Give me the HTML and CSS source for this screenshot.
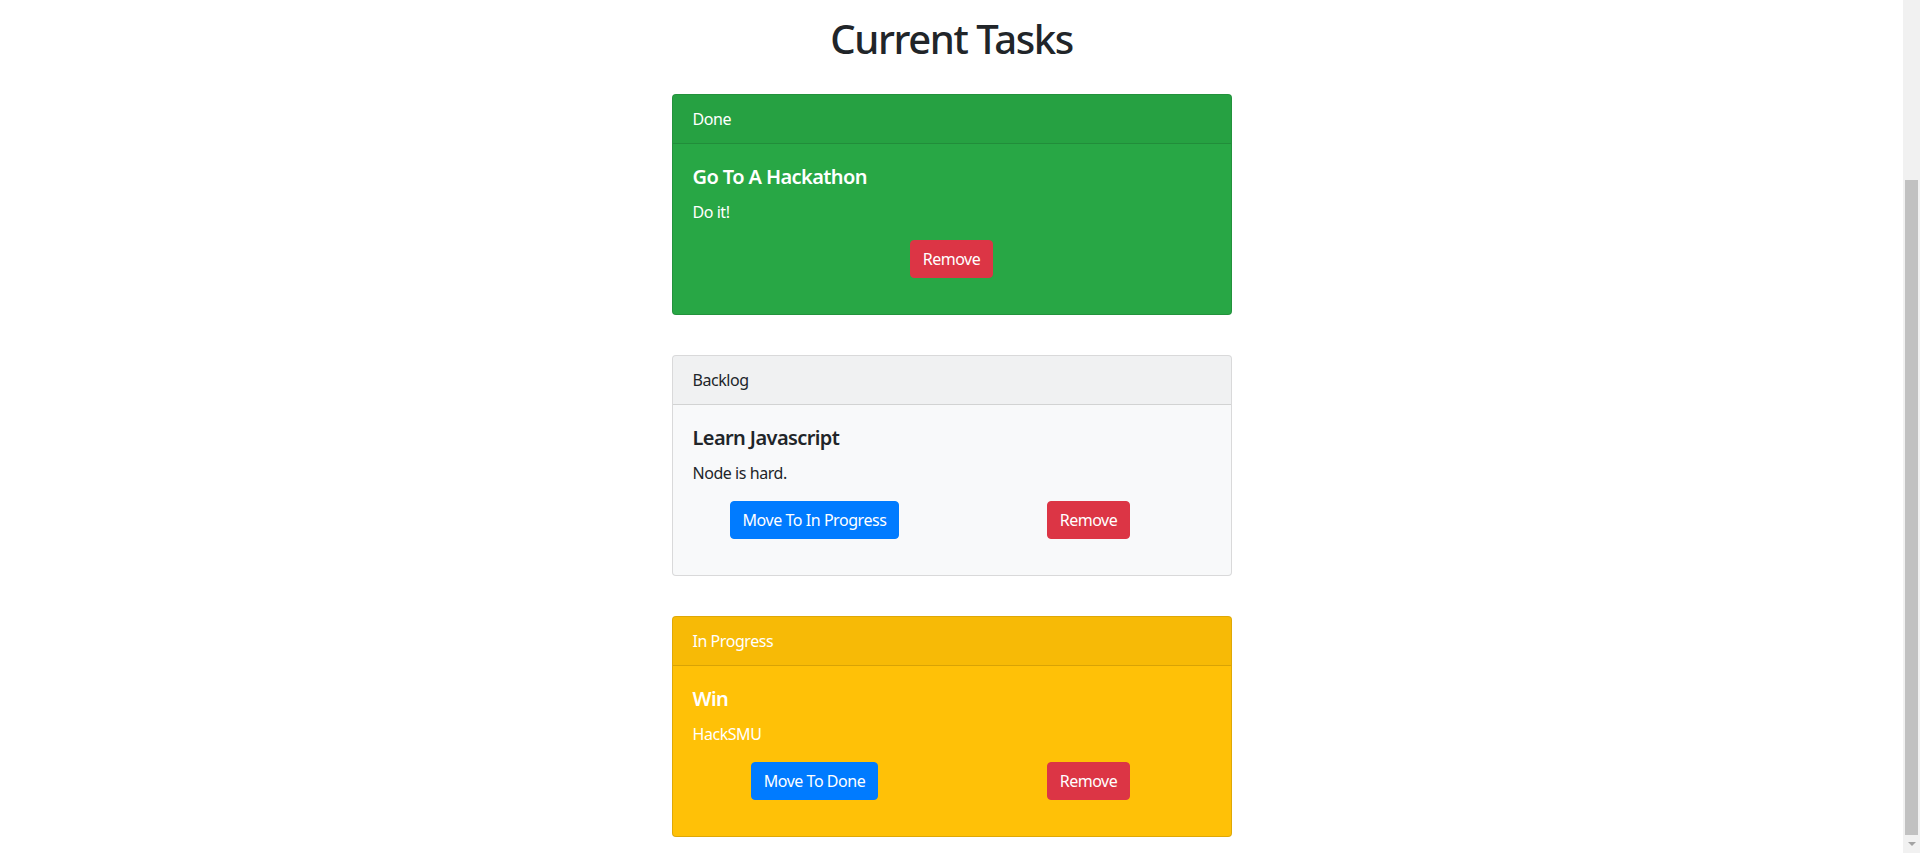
FILE: index.html
```html
<!DOCTYPE html>
<html lang="en">
<head>
<meta charset="utf-8">
<title>Current Tasks</title>
<link rel="stylesheet" href="styles.css">
</head>
<body>
<main class="page">
  <h1 class="page-title">Current Tasks</h1>

  <section class="card card-done">
    <div class="card-header">Done</div>
    <div class="card-body">
      <h5 class="card-title">Go To A Hackathon</h5>
      <p class="card-text">Do it!</p>
      <div class="actions actions-single">
        <div class="action-cell"><button class="btn btn-danger">Remove</button></div>
      </div>
    </div>
  </section>

  <section class="card card-backlog">
    <div class="card-header">Backlog</div>
    <div class="card-body">
      <h5 class="card-title">Learn Javascript</h5>
      <p class="card-text">Node is hard.</p>
      <div class="actions">
        <div class="action-cell"><button class="btn btn-primary">Move To In Progress</button></div>
        <div class="action-cell"><button class="btn btn-danger">Remove</button></div>
      </div>
    </div>
  </section>

  <section class="card card-progress">
    <div class="card-header">In Progress</div>
    <div class="card-body">
      <h5 class="card-title">Win</h5>
      <p class="card-text">HackSMU</p>
      <div class="actions">
        <div class="action-cell"><button class="btn btn-primary">Move To Done</button></div>
        <div class="action-cell"><button class="btn btn-danger">Remove</button></div>
      </div>
    </div>
  </section>
</main>
<div class="scrollbar" aria-hidden="true">
  <div class="scrollbar-thumb"></div>
  <div class="scrollbar-button"><span class="scrollbar-arrow"></span></div>
</div>
</body>
</html>
```
FILE: styles.css
```css
body {
  margin: 0;
  font-family: "Noto Sans", "Open Sans", sans-serif;
  font-size: 16px;
  line-height: 1.5;
  letter-spacing: -0.45px;
  color: #212529;
  background: #fff;
}
.page {
  margin-right: 17px;
  padding: 15px 0 16px;
}
.page-title {
  margin: 0 0 31px;
  font-size: 40px;
  font-weight: 500;
  line-height: 48px;
  letter-spacing: -1.4px;
  text-align: center;
  color: #212529;
}
.card {
  width: 560px;
  margin: 0 auto 40px;
  border: 1px solid rgba(0, 0, 0, 0.125);
  border-radius: 4px;
  box-sizing: border-box;
}
.card:last-child {
  margin-bottom: 0;
}
.card-done {
  background: #28a745;
  color: #fff;
}
.card-backlog {
  background: #f8f9fa;
  color: #212529;
}
.card-progress {
  background: #ffc107;
  color: #fff;
}
.card-header {
  padding: 12px 20px;
  background: rgba(0, 0, 0, 0.03);
  border-bottom: 1px solid rgba(0, 0, 0, 0.125);
  border-radius: 3px 3px 0 0;
}
.card-body {
  padding: 20px;
}
.card-title {
  margin: 1px 0 11px;
  font-size: 20px;
  font-weight: 600;
  line-height: 24px;
  letter-spacing: -0.6px;
}
.card-text {
  margin: 0 0 16px;
}
.actions {
  display: grid;
  grid-template-columns: 1fr 1fr;
  margin: 0 -15px 16px;
}
.actions-single {
  grid-template-columns: 1fr;
}
.action-cell {
  text-align: center;
}
.btn {
  display: inline-block;
  padding: 6px 12px;
  font-family: inherit;
  font-size: 16px;
  line-height: 24px;
  letter-spacing: -0.45px;
  border: 1px solid transparent;
  border-radius: 4px;
  color: #fff;
  cursor: pointer;
}
.btn-primary {
  background: #007bff;
  border-color: #007bff;
}
.btn-danger {
  background: #dc3545;
  border-color: #dc3545;
}

/* browser scrollbar (page is scrolled to the bottom) */
.scrollbar {
  position: fixed;
  top: 0;
  right: 0;
  width: 17px;
  height: 100%;
  display: flex;
  flex-direction: column;
  padding-top: 180px;
  box-sizing: border-box;
  background: #f1f1f1;
}
.scrollbar-thumb {
  height: 655px;
  margin: 0 2px;
  background: #c1c1c1;
}
.scrollbar-button {
  flex: 1;
  display: flex;
  align-items: center;
  justify-content: center;
}
.scrollbar-arrow {
  width: 0;
  height: 0;
  border-left: 4px solid transparent;
  border-right: 4px solid transparent;
  border-top: 4px solid #a3a3a3;
}
```
